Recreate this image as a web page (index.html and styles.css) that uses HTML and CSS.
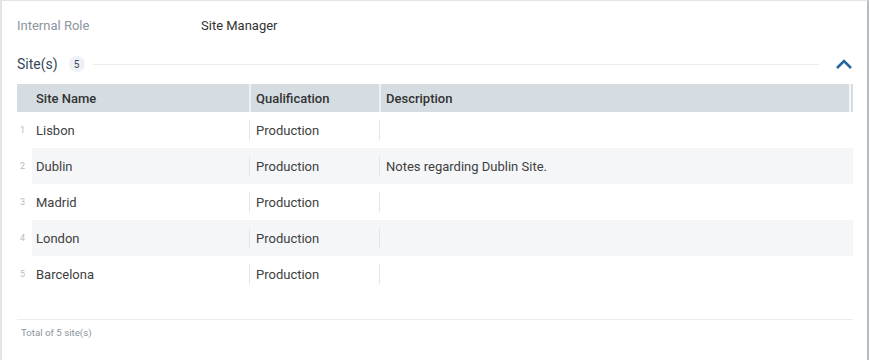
FILE: index.html
```html
<!DOCTYPE html>
<html>
<head>
<meta charset="utf-8">
<link rel="stylesheet" href="styles.css">
</head>
<body>
<div class="card">
  <div class="field">
    <div class="label">Internal Role</div>
    <div class="value">Site Manager</div>
  </div>
  <div class="section">
    <span class="title">Site(s)</span>
    <span class="badge">5</span>
    <span class="rule"></span>
    <svg class="chev" width="18" height="12" viewBox="0 0 18 12"><path d="M2 10 L9 3 L16 10" fill="none" stroke="#24679e" stroke-width="2.6"/></svg>
  </div>
  <div class="table">
    <div class="thead">
      <div class="c1">Site Name</div>
      <div class="c2">Qualification</div>
      <div class="c3">Description</div>
    </div>
    <div class="row"><span class="num">1</span><div class="c1">Lisbon</div><div class="c2">Production</div><div class="c3"></div></div>
    <div class="row alt"><span class="num">2</span><div class="c1">Dublin</div><div class="c2">Production</div><div class="c3">Notes regarding Dublin Site.</div></div>
    <div class="row"><span class="num">3</span><div class="c1">Madrid</div><div class="c2">Production</div><div class="c3"></div></div>
    <div class="row alt"><span class="num">4</span><div class="c1">London</div><div class="c2">Production</div><div class="c3"></div></div>
    <div class="row"><span class="num">5</span><div class="c1">Barcelona</div><div class="c2">Production</div><div class="c3"></div></div>
  </div>
  <div class="footer">Total of 5 site(s)</div>
</div>
</body>
</html>
```
FILE: styles.css
```css
* { box-sizing: border-box; }
html, body { margin: 0; padding: 0; background: #fff; }
body { font-family: Roboto, "Liberation Sans", sans-serif; color: #333; }
.card {
  width: 869px;
  height: 360px;
  border-top: 1px solid #e2e4e6;
  border-left: 2px solid #e2e4e6;
  border-right: 2px solid #b8bcbf;
  padding: 0 14px 0 15px;
}
.field { display: flex; height: 46px; align-items: center; padding-top: 3px; font-size: 13px; }
.label { width: 184px; color: #8a959e; }
.value { color: #333; }
.section { display: flex; align-items: center; height: 32px; margin-top: 1px; }
.title { font-size: 14px; color: #37475a; }
.badge {
  width: 16px; height: 16px; border-radius: 50%;
  background: #eef2f6; color: #37475a;
  font-size: 10px; display: flex; align-items: center; justify-content: center;
  margin-left: 11px;
}
.rule { flex: 1; height: 1px; background: #ececec; margin: 0 16px 0 8px; }
.chev { margin-right: 0; margin-top: -1px; }
.table { margin-top: 4px; }
.thead {
  display: flex; height: 28px; align-items: center;
  background: #d5dde2; font-size: 13px; font-weight: 500; color: #333;
}
.thead > div { height: 28px; display: flex; align-items: center; }
.thead .c1 { width: 234px; padding-left: 19px; border-right: 2px solid #eef1f3; }
.thead .c2 { width: 130px; padding-left: 5px; border-right: 2px solid #eef1f3; }
.thead .c3 { width: 470px; padding-left: 5px; border-right: 2px solid #f4f6f7; margin-right: 2px; }
.row { display: flex; height: 36px; align-items: center; font-size: 13px; color: #404040; position: relative; }
.row.alt { background: linear-gradient(to right, #fff 15px, #f5f6f8 15px); }
.num { position: absolute; left: 3px; font-size: 9px; color: #bbb; }
.row .c1 { width: 233px; padding-left: 19px; height: 20px; display: flex; align-items: center; border-right: 1px solid #e3e5e7; }
.row .c2 { width: 130px; padding-left: 6px; height: 20px; display: flex; align-items: center; border-right: 1px solid #e3e5e7; }
.row .c3 { padding-left: 6px; }
.footer {
  margin-top: 27px; border-top: 1px solid #ececec; height: 24px;
  font-size: 9.7px; color: #8a959e; padding-left: 4px; padding-top: 7px;
}
```
